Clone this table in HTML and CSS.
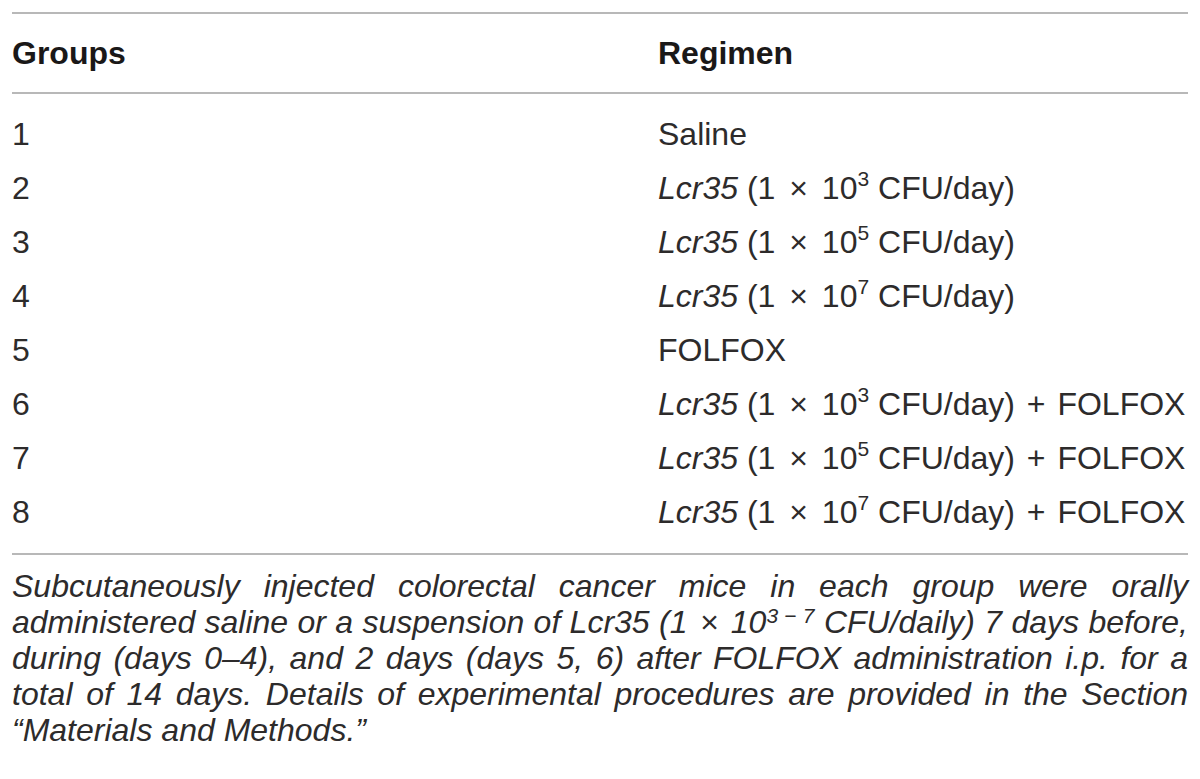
FILE: index.html
```html
<!DOCTYPE html>
<html lang="en">
<head>
<meta charset="utf-8">
<title>Table</title>
<link rel="stylesheet" href="styles.css">
</head>
<body>
<div class="page">
  <div class="table">
    <div class="row head">
      <div class="cell">Groups</div>
      <div class="cell">Regimen</div>
    </div>
    <div class="body">
      <div class="row"><div class="cell">1</div><div class="cell">Saline</div></div>
      <div class="row"><div class="cell">2</div><div class="cell"><i>Lcr35</i> (1 <span class="x">×</span> 10<sup>3</sup> CFU/day)</div></div>
      <div class="row"><div class="cell">3</div><div class="cell"><i>Lcr35</i> (1 <span class="x">×</span> 10<sup>5</sup> CFU/day)</div></div>
      <div class="row"><div class="cell">4</div><div class="cell"><i>Lcr35</i> (1 <span class="x">×</span> 10<sup>7</sup> CFU/day)</div></div>
      <div class="row"><div class="cell">5</div><div class="cell">FOLFOX</div></div>
      <div class="row"><div class="cell">6</div><div class="cell"><i>Lcr35</i> (1 <span class="x">×</span> 10<sup>3</sup> CFU/day) <span class="p">+</span> FOLFOX</div></div>
      <div class="row"><div class="cell">7</div><div class="cell"><i>Lcr35</i> (1 <span class="x">×</span> 10<sup>5</sup> CFU/day) <span class="p">+</span> FOLFOX</div></div>
      <div class="row"><div class="cell">8</div><div class="cell"><i>Lcr35</i> (1 <span class="x">×</span> 10<sup>7</sup> CFU/day) <span class="p">+</span> FOLFOX</div></div>
    </div>
  </div>
  <div class="note">
    <span class="line">Subcutaneously injected colorectal cancer mice in each group were orally</span>
    <span class="line">administered saline or a suspension of Lcr35 (1 <span class="nx">×</span> 10<sup class="nsup">3 − 7</sup> CFU/daily) 7 days before,</span>
    <span class="line">during (days 0–4), and 2 days (days 5, 6) after FOLFOX administration i.p. for a</span>
    <span class="line">total of 14 days. Details of experimental procedures are provided in the Section</span>
    <span class="line last">“Materials and Methods.”</span>
  </div>
</div>
</body>
</html>
```
FILE: styles.css
```css
html, body {
  margin: 0;
  padding: 0;
  background: #ffffff;
}

.page {
  padding: 12px 12px 0 12px;
  color: #2d2b2b;
  font-family: "Liberation Sans", Arial, sans-serif;
  font-weight: 400;
  font-size: 32px;
}

.table {
  border-top: 2px solid #b8b8b8;
  border-bottom: 2px solid #b8b8b8;
}

.row {
  display: grid;
  grid-template-columns: 646px 1fr;
  height: 54px;
  line-height: 54px;
}

.head {
  height: 80px;
  padding-top: 12px;
  box-sizing: border-box;
  border-bottom: 2px solid #b8b8b8;
  font-weight: 700;
  color: #1a1818;
}

.body {
  padding: 13px 0 14px 0;
}

.cell {
  white-space: nowrap;
}

i {
  font-style: italic;
}

.x {
  margin: 0 5px;
}

.p {
  margin: 0 3px;
}

.nx {
  margin: 0 3px;
}

sup {
  font-size: 21px;
  line-height: 0;
  vertical-align: 0;
  position: relative;
  top: -13px;
}

.nsup {
  top: -10px;
}

.note {
  font-style: italic;
  padding-top: 13px;
  line-height: 36px;
}

.line {
  display: block;
  text-align: justify;
  text-align-last: justify;
  white-space: nowrap;
}

.line.last {
  text-align-last: left;
}
```
